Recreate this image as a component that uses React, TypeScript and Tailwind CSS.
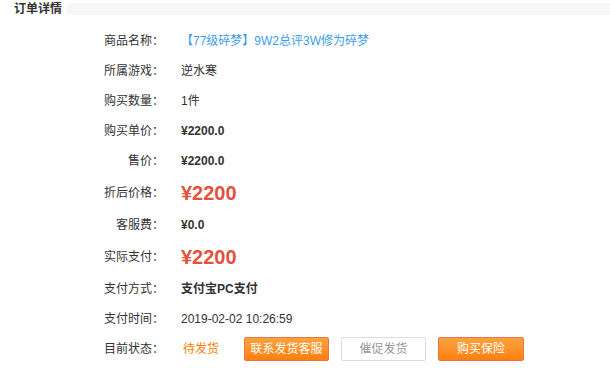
import React from 'react'

const font = { fontFamily: '"Liberation Sans", Arial, "Noto Sans CJK SC", sans-serif' }

interface RowProps {
  label: string
  tall?: boolean
  children: React.ReactNode
}

function Row({ label, tall, children }: RowProps) {
  return (
    <div className={`flex items-center ${tall ? 'h-[34px]' : 'h-[30px]'}`}>
      <div className="w-[164px] text-right text-[12px] leading-[16px] text-[#333]">{label}</div>
      <div className="ml-[17px] flex items-center text-[12px] leading-[16px] text-[#333]">{children}</div>
    </div>
  )
}

export default function App() {
  return (
    <div className="w-[610px] h-[368px] bg-white overflow-hidden" style={font}>
      {/* Header */}
      <div className="flex items-center h-[16px] pt-[1px]">
        <span className="pl-[14px] text-[12px] font-bold leading-[16px] text-[#333]">订单详情</span>
        <div className="ml-[5px] flex-1 h-[12px] bg-[#f7f7f7]" />
      </div>

      {/* Rows */}
      <div className="mt-[10px]">
        <Row label="商品名称：">
          <span className="text-[#3b9cf0]">【77级碎梦】9W2总评3W修为碎梦</span>
        </Row>
        <Row label="所属游戏：">逆水寒</Row>
        <Row label="购买数量：">1件</Row>
        <Row label="购买单价：">
          <span className="font-bold">¥2200.0</span>
        </Row>
        <Row label="售价：">
          <span className="font-bold">¥2200.0</span>
        </Row>
        <Row label="折后价格：" tall>
          <span className="text-[20px] leading-[24px] font-bold text-[#e5513d]">¥2200</span>
        </Row>
        <Row label="客服费：">
          <span className="font-bold">¥0.0</span>
        </Row>
        <Row label="实际支付：" tall>
          <span className="text-[20px] leading-[24px] font-bold text-[#e5513d]">¥2200</span>
        </Row>
        <Row label="支付方式：">
          <span className="font-bold">支付宝PC支付</span>
        </Row>
        <Row label="支付时间：">2019-02-02 10:26:59</Row>
        <Row label="目前状态：">
          <span className="text-[#ff8000] ml-[2px]">待发货</span>
          <div className="ml-[25px] flex items-center gap-[12px]">
            <button className="w-[85px] h-[24px] rounded-[2px] border border-[#ec7448] bg-gradient-to-b from-[#f9a23c] to-[#ff7f08] text-white text-[12px] leading-[22px]">
              联系发货客服
            </button>
            <button className="w-[85px] h-[24px] rounded-[2px] border border-[#dcdcdc] bg-white text-[#999] text-[12px] leading-[22px]">
              催促发货
            </button>
            <button className="w-[86px] h-[24px] rounded-[2px] border border-[#ec7448] bg-gradient-to-b from-[#f9a23c] to-[#ff7f08] text-white text-[12px] leading-[22px]">
              购买保险
            </button>
          </div>
        </Row>
      </div>
    </div>
  )
}
